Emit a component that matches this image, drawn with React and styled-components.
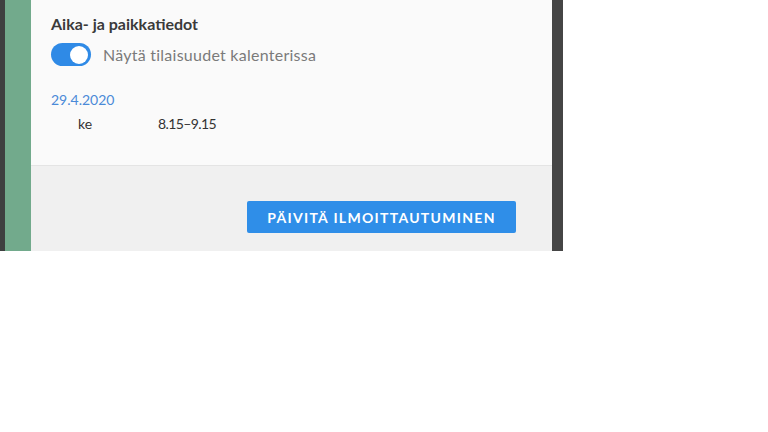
import React from 'react'
import styled, { createGlobalStyle } from 'styled-components'

const Global = createGlobalStyle`
  body {
    margin: 0;
    background: #ffffff;
    font-family: Lato, "Open Sans", sans-serif;
  }
`

const Frame = styled.div`
  display: flex;
  width: 563px;
  height: 251px;
`

const Edge = styled.div`
  width: ${props => props.w}px;
  flex: none;
  background: ${props => props.color};
`

const Panel = styled.div`
  flex: 1;
  display: flex;
  flex-direction: column;
`

const Body = styled.div`
  height: 166px;
  box-sizing: border-box;
  background: #fafafa;
  border-bottom: 1px solid #e4e4e4;
  padding: 14px 20px 0 20px;
`

const Heading = styled.div`
  font-size: 16px;
  font-weight: 700;
  color: #3a3a3a;
  line-height: 20px;
`

const ToggleRow = styled.div`
  display: flex;
  align-items: center;
  gap: 12px;
  margin-top: 9px;
`

const Switch = styled.div`
  position: relative;
  width: 40px;
  height: 23px;
  border-radius: 12px;
  background: #2f8ae6;
  flex: none;
`

const Knob = styled.div`
  position: absolute;
  right: 3px;
  top: 2.5px;
  width: 18px;
  height: 18px;
  border-radius: 50%;
  background: #ffffff;
`

const ToggleLabel = styled.span`
  font-size: 16px;
  letter-spacing: 0.25px;
  color: #7a7a7a;
`

const DateText = styled.div`
  margin-top: 24px;
  font-size: 14px;
  color: #4a8ad8;
  line-height: 20px;
`

const TimeRow = styled.div`
  display: grid;
  grid-template-columns: 80px auto;
  padding-left: 27px;
  margin-top: 4px;
  font-size: 14px;
  color: #333333;
  line-height: 20px;
`

const Time = styled.span`
  letter-spacing: -0.6px;
`

const Footer = styled.div`
  flex: 1;
  background: #f0f0f0;
  display: flex;
  justify-content: flex-end;
  align-items: flex-start;
  padding: 35px 36px 0 0;
`

const Button = styled.button`
  width: 269px;
  height: 32px;
  border: none;
  border-radius: 2px;
  background: #2f8ee8;
  color: #ffffff;
  font-family: Lato, "Open Sans", sans-serif;
  font-size: 14px;
  font-weight: 700;
  letter-spacing: 1.3px;
  text-transform: uppercase;
`

export default function App() {
  return (
    <>
      <Global />
      <Frame>
        <Edge w={5} color="#3e4040" />
        <Edge w={26} color="#72aa8c" />
        <Panel>
          <Body>
            <Heading>Aika- ja paikkatiedot</Heading>
            <ToggleRow>
              <Switch><Knob /></Switch>
              <ToggleLabel>Näytä tilaisuudet kalenterissa</ToggleLabel>
            </ToggleRow>
            <DateText>29.4.2020</DateText>
            <TimeRow>
              <span>ke</span>
              <Time>8.15–9.15</Time>
            </TimeRow>
          </Body>
          <Footer>
            <Button>Päivitä ilmoittautuminen</Button>
          </Footer>
        </Panel>
        <Edge w={11} color="#454545" />
      </Frame>
    </>
  )
}
